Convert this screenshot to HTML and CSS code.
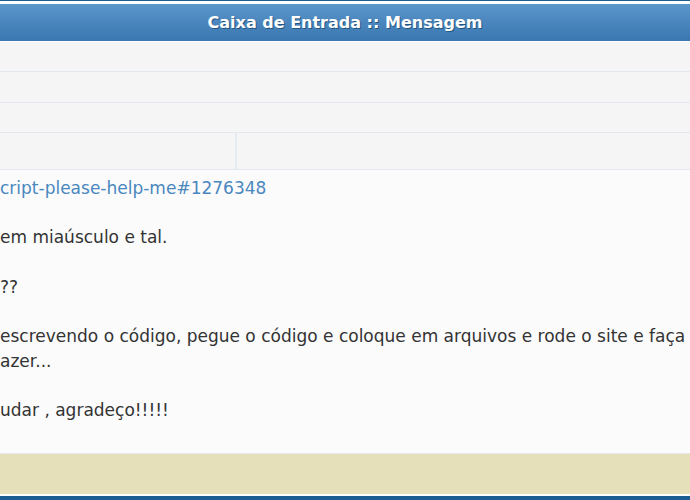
FILE: index.html
```html
<!DOCTYPE html>
<html lang="pt">
<head>
<meta charset="utf-8">
<title>Caixa de Entrada :: Mensagem</title>
<link rel="stylesheet" href="styles.css">
</head>
<body>
<div class="panel">
  <div class="panel-head">Caixa de Entrada :: Mensagem</div>
  <div class="row r1"></div>
  <div class="row r2"></div>
  <div class="row r3"></div>
  <div class="row r4">
    <div class="cell cell-left"></div>
    <div class="cell cell-right"></div>
  </div>
  <div class="message">
    <a class="msg-link" href="#">cript-please-help-me#1276348</a><br>
    <br>
    em miaúsculo e tal.<br>
    <br>
    ??<br>
    <br>
    escrevendo o código, pegue o código e coloque em arquivos e rode o site e faça<br>
    azer...<br>
    <br>
    udar , agradeço!!!!!
  </div>
  <div class="panel-foot"></div>
</div>
<div class="bottom-bar"></div>
</body>
</html>
```

FILE: styles.css
```css
html, body {
  margin: 0;
  padding: 0;
  background: #ffffff;
  overflow: hidden;
}

body {
  width: 690px;
  height: 500px;
  font-family: "DejaVu Sans", Verdana, sans-serif;
}

.panel {
  border-top: 1px solid #1d5c8f;
  padding-top: 3px;
  background: #ffffff;
}

.panel-head {
  height: 37px;
  line-height: 37px;
  background: linear-gradient(to bottom, #5c97ca 0%, #4a86bd 50%, #3b77b0 100%);
  color: #ffffff;
  font-weight: bold;
  font-size: 16px;
  text-align: center;
  text-shadow: 1px 1px 0 #24567f;
  border-bottom: 1px solid #ffffff;
}

.row {
  background: #f5f5f5;
  border-bottom: 1px solid #e3e8ef;
}

.r1 { height: 29px; }
.r2 { height: 30px; }
.r3 { height: 29px; }
.r4 {
  height: 36px;
  display: flex;
}

.cell-left {
  width: 235px;
  border-right: 2px solid #e6ebf2;
}

.cell-right {
  flex: 1;
}

.message {
  background: #fbfbfb;
  height: 277px;
  padding-top: 6px;
  font-size: 17px;
  line-height: 24.7px;
  color: #333333;
  white-space: nowrap;
  overflow: hidden;
  border-bottom: 1px solid #e6eaf0;
}

.msg-link {
  color: #4a87bf;
  text-decoration: none;
}

.panel-foot {
  height: 40px;
  background: #e5dfba;
  border-bottom: 2px solid #ffffff;
}

.bottom-bar {
  height: 10px;
  background: #1b5d93;
}
```
